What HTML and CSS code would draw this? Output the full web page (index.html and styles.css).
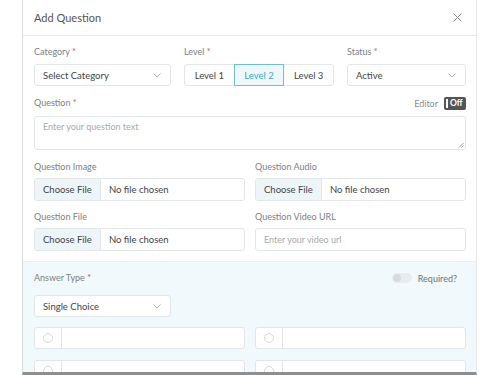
FILE: index.html
```html
<!DOCTYPE html>
<html lang="en">

<head>
  <meta charset="UTF-8">
  <meta name="viewport" content="width=device-width, initial-scale=1.0">
  <title>Add Question</title>
  <link rel="stylesheet" href="styles.css">
</head>

<body>
  <div class="modal">
    <div class="modal-header">
      <h3>Add Question</h3>
      <svg class="close" width="9" height="9" viewBox="0 0 9 9">
        <path d="M0.5 0.5 L8.5 8.5 M8.5 0.5 L0.5 8.5" stroke="#8a8f94" stroke-width="1"/>
      </svg>
    </div>

    <div class="modal-body">
      <div class="row-three">
        <div class="field">
          <label>Category <span class="req">*</span></label>
          <div class="select">Select Category
            <svg width="8" height="5" viewBox="0 0 8 5"><polyline points="0.5,0.5 4,4 7.5,0.5" fill="none" stroke="#9aa0a6" stroke-width="0.8"/></svg>
          </div>
        </div>
        <div class="field">
          <label>Level <span class="req">*</span></label>
          <div class="levels">
            <div class="level">Level 1</div>
            <div class="level active">Level 2</div>
            <div class="level">Level 3</div>
          </div>
        </div>
        <div class="field">
          <label>Status <span class="req">*</span></label>
          <div class="select">Active
            <svg width="8" height="5" viewBox="0 0 8 5"><polyline points="0.5,0.5 4,4 7.5,0.5" fill="none" stroke="#9aa0a6" stroke-width="0.8"/></svg>
          </div>
        </div>
      </div>

      <div class="field">
        <div class="label-row">
          <label>Question <span class="req">*</span></label>
          <div class="editor">Editor <span class="editor-toggle"><span class="knob"></span>Off</span></div>
        </div>
        <div class="textarea">Enter your question text
          <svg class="grip" width="6" height="6" viewBox="0 0 6 6"><path d="M5.5 1 L1 5.5 M5.5 3.5 L3.5 5.5" stroke="#888" stroke-width="0.8"/></svg>
        </div>
      </div>

      <div class="row-two">
        <div class="field">
          <label>Question Image</label>
          <div class="file"><span class="file-btn">Choose File</span><span>No file chosen</span></div>
        </div>
        <div class="field">
          <label>Question Audio</label>
          <div class="file"><span class="file-btn">Choose File</span><span>No file chosen</span></div>
        </div>
      </div>

      <div class="row-two">
        <div class="field">
          <label>Question File</label>
          <div class="file"><span class="file-btn">Choose File</span><span>No file chosen</span></div>
        </div>
        <div class="field">
          <label>Question Video URL</label>
          <div class="input placeholder">Enter your video url</div>
        </div>
      </div>
    </div>

    <div class="answers">
      <div class="label-row">
        <label>Answer Type <span class="req">*</span></label>
        <div class="required"><span class="switch"><span class="dot"></span></span>Required?</div>
      </div>
      <div class="select answer-type">Single Choice
        <svg width="8" height="5" viewBox="0 0 8 5"><polyline points="0.5,0.5 4,4 7.5,0.5" fill="none" stroke="#9aa0a6" stroke-width="0.8"/></svg>
      </div>
      <div class="row-two options">
        <div class="option"><span class="radio-cell"><span class="radio"></span></span></div>
        <div class="option"><span class="radio-cell"><span class="radio"></span></span></div>
        <div class="option"><span class="radio-cell"><span class="radio"></span></span></div>
        <div class="option"><span class="radio-cell"><span class="radio"></span></span></div>
      </div>
    </div>
  </div>
</body>

</html>
```

FILE: styles.css
```css
body {
  margin: 0;
  padding: 0 23px 0 22px;
  height: 375px;
  overflow: hidden;
  background-color: #fff;
  font-family: "Lato", "Open Sans", sans-serif;
  color: #444;
}

.modal {
  height: 372px;
  overflow: hidden;
  background-color: #fff;
  border-left: 1px solid #d9dcdf;
  border-right: 1px solid #e6e8ea;
  border-bottom: 3px solid #8e8e8e;
}

.modal-header {
  height: 35px;
  display: flex;
  align-items: center;
  justify-content: space-between;
  padding: 0 14px 0 11px;
  border-bottom: 1px solid #e6e9ec;
}

h3 {
  margin: 0;
  font-size: 11px;
  font-weight: 400;
  color: #555;
}

.modal-body {
  padding: 10px 10px 0 11px;
}

label {
  display: block;
  font-size: 9px;
  line-height: 12px;
  color: #7b7f84;
  margin-bottom: 6px;
}

.req {
  color: #e2474b;
}

.field {
  margin-bottom: 11px;
}

.row-three {
  display: grid;
  grid-template-columns: 137px 150px 1fr;
  column-gap: 13px;
}

.row-two {
  display: grid;
  grid-template-columns: 1fr 1fr;
  column-gap: 10px;
}

.row-two .field {
  margin-bottom: 10px;
}

.row-two label {
  margin-bottom: 5px;
}

.select {
  height: 22px;
  box-sizing: border-box;
  border: 1px solid #e3e6e9;
  border-radius: 3px;
  display: flex;
  align-items: center;
  justify-content: space-between;
  padding: 0 9px 0 8px;
  font-size: 9.5px;
  color: #3f4347;
  background-color: #fff;
}

.levels {
  display: flex;
  height: 22px;
}

.level {
  flex: 1;
  display: flex;
  align-items: center;
  justify-content: center;
  font-size: 9.5px;
  color: #3f4347;
  border: 1px solid #e3e6e9;
  margin-left: -1px;
}

.level:first-child {
  margin-left: 0;
  border-radius: 3px 0 0 3px;
}

.level:last-child {
  border-radius: 0 3px 3px 0;
}

.level.active {
  border-color: #6fbfd3;
  background-color: #eef8fb;
  color: #3da8c6;
  position: relative;
}

.label-row {
  display: flex;
  justify-content: space-between;
  align-items: center;
  height: 12px;
  margin-bottom: 7px;
}

.label-row label {
  margin-bottom: 0;
}

.editor {
  display: flex;
  align-items: center;
  font-size: 9px;
  color: #8a8e92;
}

.editor-toggle {
  margin-left: 6px;
  height: 13px;
  width: 22px;
  box-sizing: border-box;
  background-color: #555;
  border-radius: 2px;
  color: #fff;
  font-size: 8.5px;
  font-weight: 700;
  display: flex;
  align-items: center;
  padding-left: 2px;
}

.knob {
  width: 2px;
  height: 9px;
  background-color: #fff;
  margin-right: 2px;
}

.textarea {
  position: relative;
  height: 34px;
  box-sizing: border-box;
  border: 1px solid #e3e6e9;
  border-radius: 3px;
  padding: 4px 8px;
  font-size: 9px;
  color: #a6aaae;
}

.grip {
  position: absolute;
  right: 1px;
  bottom: 1px;
}

.file,
.input {
  height: 23px;
  box-sizing: border-box;
  border: 1px solid #e3e6e9;
  border-radius: 3px;
  display: flex;
  align-items: center;
  font-size: 9.5px;
  color: #3f4347;
  overflow: hidden;
}

.file-btn {
  height: 100%;
  display: flex;
  align-items: center;
  padding: 0 8px;
  margin-right: 8px;
  background-color: #eef5f8;
  border-right: 1px solid #e3e6e9;
}

.input.placeholder {
  padding-left: 8px;
  font-size: 9px;
  color: #a6aaae;
}

.answers {
  background-color: #f2f9fc;
  border-top: 1px solid #e8eef1;
  padding: 10px 10px 0 11px;
  height: 120px;
}

.answers .label-row {
  margin-bottom: 11px;
}

.required {
  display: flex;
  align-items: center;
  font-size: 9px;
  color: #6f7378;
  margin-right: 9px;
}

.switch {
  width: 19px;
  height: 10px;
  border-radius: 5px;
  background-color: #e9ecee;
  margin-right: 6px;
  display: flex;
  align-items: center;
  padding-left: 1px;
}

.dot {
  width: 8px;
  height: 8px;
  border-radius: 50%;
  background-color: #d8dbde;
}

.answer-type {
  width: 137px;
  margin-bottom: 10px;
}

.options {
  row-gap: 11px;
}

.options .option {
  margin: 0;
}

.option {
  height: 22px;
  box-sizing: border-box;
  border: 1px solid #e3e6e9;
  border-radius: 3px;
  background-color: #fff;
  display: flex;
}

.radio-cell {
  width: 26px;
  border-right: 1px solid #e3e6e9;
  display: flex;
  align-items: center;
  justify-content: center;
}

.radio {
  width: 8px;
  height: 8px;
  border: 1px solid #d6d9dc;
  border-radius: 50%;
}
```
